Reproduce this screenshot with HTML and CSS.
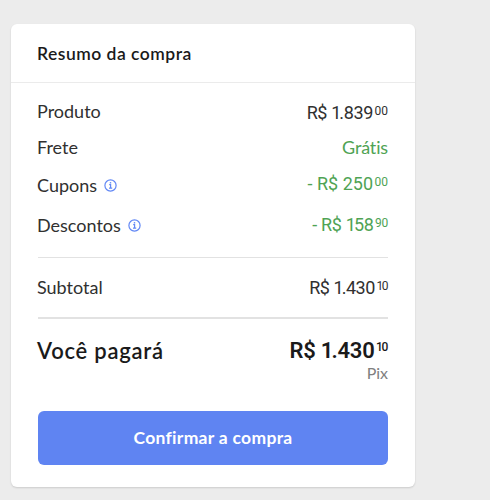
FILE: index.html
```
<!DOCTYPE html>
<html lang="pt-BR">
<head>
<meta charset="utf-8">
<title>Resumo da compra</title>
<link rel="stylesheet" href="styles.css">
</head>
<body>
<main class="card">
  <h1 class="title">Resumo da compra</h1>
  <div class="content">
    <dl class="rows">
      <div class="row"><dt>Produto</dt><dd class="price first">R$ <span class="one">1</span>.839<sup>00</sup></dd></div>
      <div class="row shipping"><dt>Frete</dt><dd class="free">Grátis</dd></div>
      <div class="row coupons"><dt>Cupons</dt>
        <svg class="info" viewBox="0 0 13 13"><circle cx="6.5" cy="6.5" r="5.6"/><path d="M5.2 5.6H6.6V9M5 9.1H8.2"/><path class="dot" d="M5.8 3.1h1.4v1.4H5.8z"/></svg>
        <dd class="price discount">- R$ 250<sup>00</sup></dd></div>
      <div class="row discounts"><dt>Descontos</dt>
        <svg class="info" viewBox="0 0 13 13"><circle cx="6.5" cy="6.5" r="5.6"/><path d="M5.2 5.6H6.6V9M5 9.1H8.2"/><path class="dot" d="M5.8 3.1h1.4v1.4H5.8z"/></svg>
        <dd class="price discount">- R$ <span class="one">1</span>58<sup>90</sup></dd></div>
    </dl>
    <div class="row subtotal"><span>Subtotal</span><span class="price">R$ <span class="one">1</span>.430<sup><span class="small-one">1</span>0</sup></span></div>
    <div class="row total"><span class="pay">Você pagará</span><span class="price">R$ <span class="one">1</span>.430<sup><span class="small-one">1</span>0</sup></span></div>
    <div class="method">Pix</div>
    <button class="confirm" type="button">Confirmar a compra</button>
  </div>
</main>
</body>
</html>
```
FILE: styles.css
```
* { box-sizing: border-box; }
body {
  margin: 0;
  padding: 24px 75px 0 11px;
  height: 500px;
  overflow: hidden;
  background: #ececec;
  color: #303030;
  font: 18px/24px Lato, "Liberation Sans", sans-serif;
  font-variant-ligatures: none;
}
.card {
  height: 463px;
  background: #fff;
  border-radius: 6px;
  box-shadow: 0 1px 2px rgba(0, 0, 0, .14);
}
.title {
  margin: 0;
  height: 59px;
  padding: 18px 27px 0 26px;
  border-bottom: 1px solid #ebebeb;
  color: #1a1a1a;
  font-size: 17.5px;
  font-weight: 600;
  letter-spacing: .49px;
}
.content { padding: 16px 27px 0 27px; }
.rows {
  margin: 0;
  height: 159px;
  border-bottom: 1px solid #e2e2e2;
}
.row { display: flex; height: 24px; white-space: nowrap; }
.row dt, .subtotal > :first-child, .pay { margin-left: -1px; }
.shipping { margin-top: 12px; }
.coupons { margin-top: 14px; }
.discounts { margin-top: 16px; }
.price, .free { margin: 0 0 0 auto; }
.price {
  padding-top: 1px;
  font-family: Roboto, "Liberation Sans", sans-serif;
}
.one { letter-spacing: -2px; }
.small-one { letter-spacing: -1.5px; }
.price sup {
  margin-left: 1.5px;
  font-size: 12px;
  line-height: 0;
  vertical-align: 4.5px;
}
.first { padding-top: 2px; letter-spacing: -.36px; }
.first sup { letter-spacing: 0; }
.free, .discount { color: #4fa354; }
.free { letter-spacing: -.15px; }
.discount { margin-top: -2px; }
.discounts .price { margin-top: -1px; letter-spacing: -.3px; }
.info {
  width: 13px;
  height: 13px;
  margin: 6px 0 0 7.4px;
  fill: none;
  stroke: #6288f5;
  stroke-width: 1.2;
}
.info .dot { fill: #6288f5; stroke: none; }
.subtotal {
  height: 61px;
  padding-top: 17px;
  border-bottom: 2px solid #e2e2e2;
}
.subtotal .price { letter-spacing: -.45px; }
.total {
  height: 42px;
  padding-top: 20px;
  color: #1a1a1a;
  font-size: 22px;
  font-weight: 600;
}
.pay { letter-spacing: .75px; }
.total .price { padding-top: 0; letter-spacing: -.2px; }
.total sup { font-weight: 500; vertical-align: 7px; }
.method {
  height: 50px;
  color: #808080;
  font-size: 16px;
  text-align: right;
}
.confirm {
  display: block;
  width: 350px;
  height: 54px;
  padding: 0;
  border: 0;
  border-radius: 6px;
  background: #5f84f2;
  color: #fff;
  font: 700 17.5px/24px Lato, "Liberation Sans", sans-serif;
  font-variant-ligatures: none;
  letter-spacing: .3px;
}
```
